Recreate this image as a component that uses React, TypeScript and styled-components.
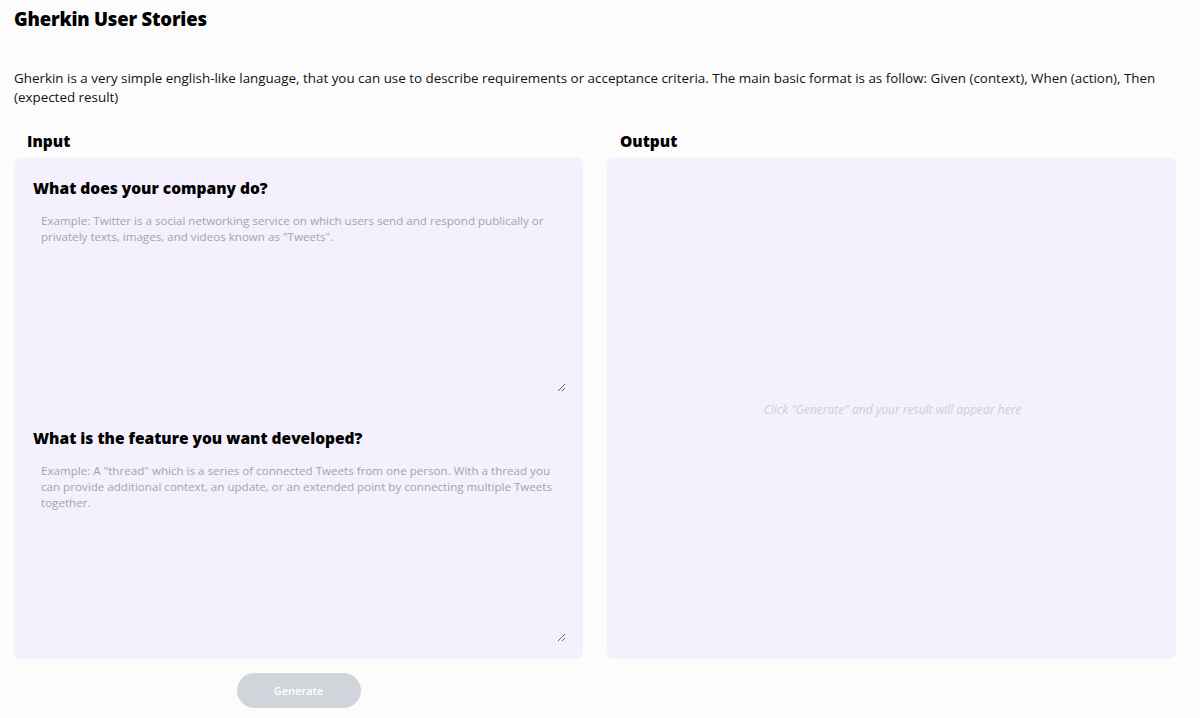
import React from "react";
import styled, { createGlobalStyle } from "styled-components";

const Global = createGlobalStyle`
  html, body { margin: 0; padding: 0; background: #fcfcfd; }
  body { font-family: "Open Sans", "Noto Sans", sans-serif; color: #111; }
  * { box-sizing: border-box; }
`;

const Page = styled.div`
  padding: 6px 24px 10px 14px;
  width: 1200px;
`;

const Title = styled.h1`
  margin: 0;
  font-size: 18.5px;
  font-weight: 800;
  line-height: 26px;
  letter-spacing: -0.2px;
  color: #000;
`;

const Intro = styled.p`
  margin: 37px 0 0;
  font-size: 13.4px;
  line-height: 19px;
  color: #111;
`;

const Columns = styled.div`
  display: grid;
  grid-template-columns: 1fr 1fr;
  column-gap: 24px;
  margin-top: 24px;
`;

const Column = styled.div`
  display: flex;
  flex-direction: column;
`;

const Label = styled.h2`
  margin: 0 0 7px 13px;
  font-size: 15.5px;
  font-weight: 800;
  line-height: 20px;
  color: #000;
`;

const Panel = styled.div<{ $center?: boolean }>`
  background: #f5f0fe;
  border-radius: 6px;
  height: 501px;
  padding: 18px 17px 17px 19px;
  display: flex;
  flex-direction: column;
  ${(p) => p.$center && `align-items: center; justify-content: center;`}
`;

const Question = styled.h3`
  margin: 0 0 8px;
  font-size: 15.5px;
  font-weight: 800;
  line-height: 24px;
  color: #000;
`;

const Area = styled.textarea<{ $gap?: number }>`
  display: block;
  width: 100%;
  height: 181px;
  margin-top: ${(p) => p.$gap ?? 0}px;
  background: transparent;
  border: none;
  outline: none;
  padding: 2px 8px;
  font-family: inherit;
  font-size: 11.6px;
  line-height: 16px;
  color: #333;
  resize: vertical;
  &::placeholder { color: #a3a3ad; }
  & + h3 { margin-top: 34px; }
`;

const Hint = styled.span`
  font-size: 12px;
  font-style: italic;
  color: #cfcdd8;
`;

const ButtonRow = styled.div`
  display: flex;
  justify-content: center;
  margin-top: 14px;
`;

const Button = styled.button`
  width: 124px;
  height: 35px;
  border: none;
  border-radius: 18px;
  background: #d1d5db;
  color: #fff;
  font-family: inherit;
  font-size: 11px;
  font-weight: 600;
`;

export default function App() {
  return (
    <>
      <Global />
      <Page>
        <Title>Gherkin User Stories</Title>
        <Intro>
          Gherkin is a very simple english-like language, that you can use to describe requirements or
          acceptance criteria. The main basic format is as follow: Given (context), When (action), Then
          (expected result)
        </Intro>
        <Columns>
          <Column>
            <Label>Input</Label>
            <Panel>
              <Question>What does your company do?</Question>
              <Area
                $gap={3}
                placeholder={'Example: Twitter is a social networking service on which users send and respond publically or privately texts, images, and videos known as "Tweets".'}
              />
              <Question>What is the feature you want developed?</Question>
              <Area
                $gap={3}
                placeholder={'Example: A "thread" which is a series of connected Tweets from one person. With a thread you can provide additional context, an update, or an extended point by connecting multiple Tweets together.'}
              />
            </Panel>
            <ButtonRow>
              <Button disabled>Generate</Button>
            </ButtonRow>
          </Column>
          <Column>
            <Label>Output</Label>
            <Panel $center>
              <Hint>Click "Generate" and your result will appear here</Hint>
            </Panel>
          </Column>
        </Columns>
      </Page>
    </>
  );
}
